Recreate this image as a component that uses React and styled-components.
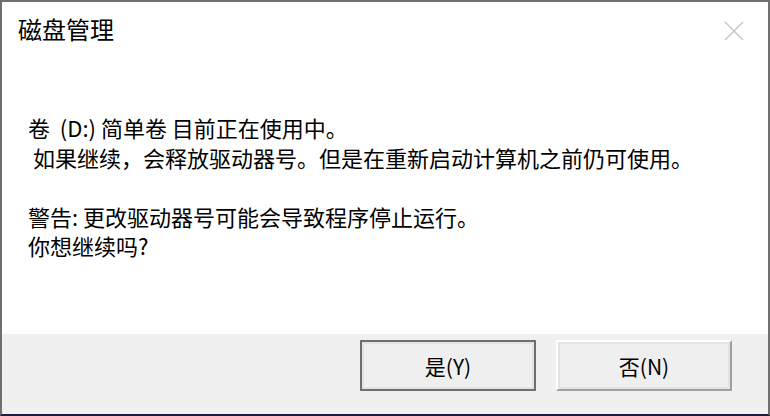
import React from 'react';
import styled, { createGlobalStyle } from 'styled-components';

const GlobalStyle = createGlobalStyle`
  html, body {
    margin: 0;
    padding: 0;
    background: #1c1c3c;
  }
  * {
    box-sizing: border-box;
  }
`;

const Window = styled.div`
  width: 770px;
  height: 416px;
  display: flex;
  flex-direction: column;
  background: #ffffff;
  border: 2px solid #6f6f6f;
  border-bottom-color: #1c1c3c;
  font-family: "Noto Sans CJK SC", "Microsoft YaHei", sans-serif;
  color: #000;
`;

const TitleBar = styled.div`
  display: flex;
  justify-content: space-between;
  align-items: flex-start;
  height: 90px;
  padding: 11px 23px 0 16px;
`;

const Title = styled.h1`
  margin: 0;
  font-size: 24px;
  font-weight: 400;
  line-height: 32px;
`;

const CloseButton = styled.button`
  width: 22px;
  height: 22px;
  margin-top: 7px;
  padding: 0;
  border: none;
  background: transparent;
  display: flex;
  align-items: center;
  justify-content: center;
`;

const Message = styled.div`
  flex: 1;
  padding: 21px 0 0 26px;
  font-size: 22px;
  line-height: 29.5px;
  white-space: pre;
`;

const Line = styled.p`
  margin: 0;
  min-height: 29.5px;
`;

const Footer = styled.div`
  height: 80px;
  background: #f0f0f0;
  display: flex;
  justify-content: flex-end;
  align-items: flex-start;
  gap: 20px;
  padding: 6px 36px 0 0;
`;

const Button = styled.button`
  width: 176px;
  height: 51px;
  background: #efefef;
  font-family: inherit;
  font-size: 21px;
  color: #000;
  padding: 0;
  border: 2px solid ${(p) => (p.$primary ? '#6f6f6f' : '#ffffff')};
  border-right-color: ${(p) => (p.$primary ? '#6f6f6f' : '#a0a0a0')};
  border-bottom-color: ${(p) => (p.$primary ? '#6f6f6f' : '#a0a0a0')};
  box-shadow: inset 2px 2px 0 #e3e3e3, inset -2px -2px 0 #e3e3e3;
`;

const lines = [
  '卷  (D:) 简单卷 目前正在使用中。',
  ' 如果继续，会释放驱动器号。但是在重新启动计算机之前仍可使用。',
  '',
  '警告: 更改驱动器号可能会导致程序停止运行。',
  '你想继续吗?',
];

export default function App() {
  return (
    <>
      <GlobalStyle />
      <Window>
        <TitleBar>
          <Title>磁盘管理</Title>
          <CloseButton aria-label="关闭">
            <svg width="20" height="20" viewBox="0 0 20 20">
              <path d="M1 1 L19 19 M19 1 L1 19" stroke="#c4c4c4" strokeWidth="1.4" fill="none" />
            </svg>
          </CloseButton>
        </TitleBar>
        <Message>
          {lines.map((l, i) => (
            <Line key={i}>{l}</Line>
          ))}
        </Message>
        <Footer>
          <Button $primary>是(Y)</Button>
          <Button>否(N)</Button>
        </Footer>
      </Window>
    </>
  );
}
